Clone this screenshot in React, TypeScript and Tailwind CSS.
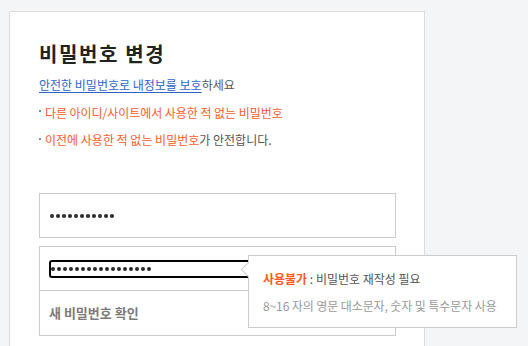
import React from "react";

const font = { fontFamily: '"Noto Sans CJK KR", "Noto Sans", sans-serif' };

function Dots({ n }: { n: number }) {
  return (
    <div className="flex gap-[2px]">
      {Array.from({ length: n }).map((_, i) => (
        <span key={i} className="block w-[4px] h-[4px] rounded-full bg-[#2a2a2a]" />
      ))}
    </div>
  );
}

function Bullet() {
  return <span className="inline-block w-[2px] h-[2px] bg-[#8a8a8a] align-middle mr-[4px] relative top-[-3px]" />;
}

export default function App() {
  return (
    <div className="w-[528px] h-[346px] bg-[#f4f5f7] overflow-hidden" style={font}>
      <div className="ml-[9px] mt-[11px] w-[416px] h-[400px] bg-white border border-[#dcdcdc] pl-[29px] pr-[28px] pt-[30px]">
        <h1 className="text-[20px] leading-[24px] font-bold text-[#222] tracking-[1.6px]">비밀번호 변경</h1>
        <p className="mt-[11px] text-[12px] leading-[16px] text-[#555]">
          <span className="text-[#2f63c8] underline underline-offset-[2px]">안전한 비밀번호로 내정보를 보호</span>하세요
        </p>
        <p className="mt-[11.5px] text-[12px] leading-[16px] tracking-[-0.05px] text-[#ff5b2b]">
          <Bullet />다른 아이디/사이트에서 사용한 적 없는 비밀번호
        </p>
        <p className="mt-[11.5px] text-[12px] leading-[16px] text-[#555]">
          <Bullet />
          <span className="text-[#ff5b2b]">이전에 사용한 적 없는 비밀번호</span>가 안전합니다.
        </p>

        <div className="mt-[45px] h-[45px] border border-[#cccccc] flex items-center pl-[10px]">
          <Dots n={11} />
        </div>

        <div className="relative mt-[8px] border border-[#cccccc]">
          <div className="h-[44px] border-b border-[#cccccc] flex items-center pl-[9px] pr-[9px]">
            <div className="w-full h-[18px] border-2 border-black rounded-[3px] flex items-center pl-[0px]">
              <Dots n={17} />
            </div>
          </div>
          <div className="h-[44px] flex items-center pl-[9px] text-[13px] font-bold text-[#7a7a7a]">
            새 비밀번호 확인
          </div>

          <div className="absolute left-[208px] top-[8px] w-[269px] h-[73px] bg-white border border-[#cccccc] pl-[14px] pt-[15px]">
            <span className="absolute left-[-6px] top-[8px] w-[11px] h-[11px] bg-white border-l border-b border-[#cccccc] rotate-45" />
            <p className="text-[12px] leading-[16px] text-[#555]">
              <span className="text-[#ff5b22] font-bold">사용불가</span> : 비밀번호 재작성 필요
            </p>
            <p className="mt-[11px] text-[12px] leading-[16px] tracking-[-0.1px] text-[#9a9a9a]">
              8~16 자의 영문 대소문자, 숫자 및 특수문자 사용
            </p>
          </div>
        </div>
      </div>
    </div>
  );
}
